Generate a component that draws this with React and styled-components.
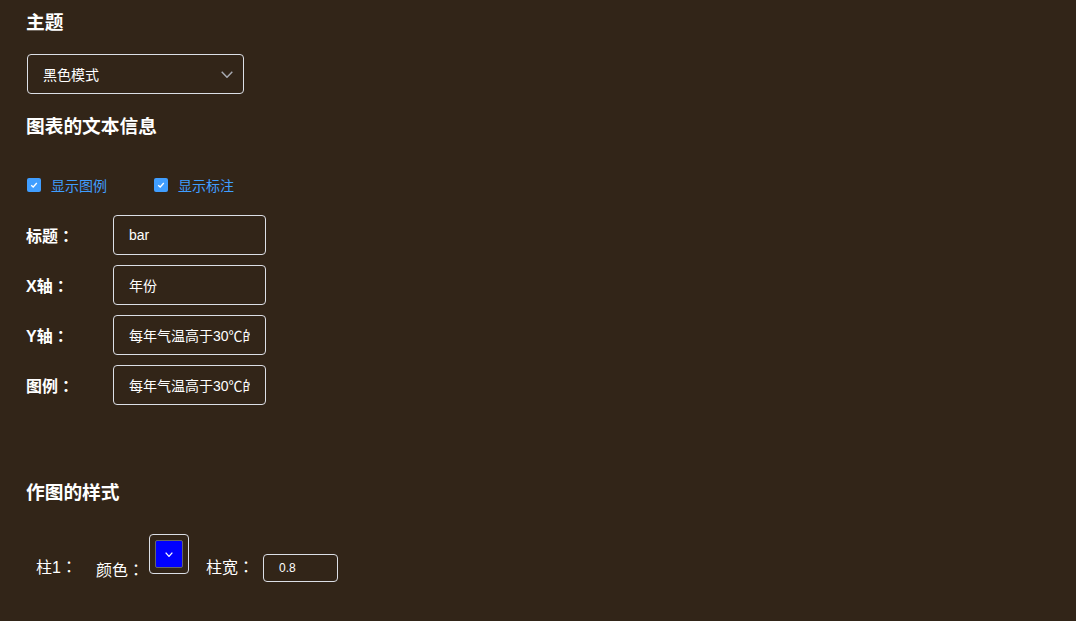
import React from "react";
import styled, { createGlobalStyle } from "styled-components";

const GlobalStyle = createGlobalStyle`
  html, body {
    margin: 0;
    padding: 0;
    background: #322518;
  }
  body {
    font-family: "Liberation Sans", "Noto Sans CJK SC", sans-serif;
    color: #ffffff;
  }
`;

const Chevron = ({ w = 12, h = 7, color = "#a8abb2", stroke = 1.4 }) => (
  <svg width={w} height={h} viewBox={`0 0 ${w} ${h}`}>
    <polyline
      points={`${stroke / 2},${stroke / 2} ${w / 2},${h - stroke / 2} ${w - stroke / 2},${stroke / 2}`}
      fill="none"
      stroke={color}
      strokeWidth={stroke}
    />
  </svg>
);

const Tick = () => (
  <svg width="10" height="10" viewBox="0 0 10 10">
    <path d="M2.2 5.2 4.2 7 7.8 3" fill="none" stroke="#fff" strokeWidth="1.3" />
  </svg>
);

const items = [
  { label: "标题", value: "bar" },
  { label: "X轴", value: "年份" },
  { label: "Y轴", value: "每年气温高于30℃的天数" },
  { label: "图例", value: "每年气温高于30℃的天数" },
];

const App = () => {
  return (
    <Page>
      <GlobalStyle />
      <Heading>主题</Heading>
      <Select>
        <span>黑色模式</span>
        <Chevron />
      </Select>
      <Heading $top={21}>图表的文本信息</Heading>
      <CheckRow>
        <Check>
          <Box>
            <Tick />
          </Box>
          显示图例
        </Check>
        <Check>
          <Box>
            <Tick />
          </Box>
          显示标注
        </Check>
      </CheckRow>
      <Form>
        {items.map((it) => (
          <FormRow key={it.label}>
            <Label>
              {it.label}
              <Colon>：</Colon>
            </Label>
            <Input>
              <span>{it.value}</span>
            </Input>
          </FormRow>
        ))}
      </Form>
      <Heading $top={76}>作图的样式</Heading>
      <StyleRow>
        <Plain $top={20} $right={19}>
          柱1<Colon>：</Colon>
        </Plain>
        <Plain $top={23} $right={5}>
          颜色<Colon>：</Colon>
        </Plain>
        <Picker>
          <Swatch>
            <Chevron w={8} h={5} color="#ffffff" stroke={1.3} />
          </Swatch>
        </Picker>
        <Plain $top={20} $right={9} $left={17}>
          柱宽<Colon>：</Colon>
        </Plain>
        <SmallInput>0.8</SmallInput>
      </StyleRow>
    </Page>
  );
};

export default App;

const Page = styled.div`
  padding: 11px 26px 30px;
  display: flex;
  flex-direction: column;
  align-items: flex-start;
`;

const Heading = styled.h3`
  margin: ${(p) => p.$top || 0}px 0 0;
  font-size: 18.72px;
  line-height: 24px;
  font-weight: 700;
  color: #ffffff;
`;

const Select = styled.div`
  margin: 19px 0 0 1px;
  box-sizing: border-box;
  width: 217px;
  height: 40px;
  padding: 0 10px 0 15px;
  border: 1px solid #dcdfe6;
  border-radius: 4px;
  display: flex;
  align-items: center;
  justify-content: space-between;
  font-size: 14px;
  color: #ffffff;
`;

const CheckRow = styled.div`
  margin-top: 36px;
  height: 20px;
  display: flex;
  align-items: center;
  padding-left: 1px;
`;

const Check = styled.label`
  display: flex;
  align-items: center;
  gap: 10px;
  margin-right: 47px;
  font-size: 14px;
  color: #409eff;
`;

const Box = styled.span`
  width: 14px;
  height: 14px;
  border-radius: 2px;
  background: #409eff;
  display: flex;
  align-items: center;
  justify-content: center;
`;

const Form = styled.div`
  margin-top: 20px;
  display: flex;
  flex-direction: column;
  gap: 10px;
`;

const FormRow = styled.div`
  display: flex;
  align-items: center;
`;

const Colon = styled.span`
  font-family: "Noto Sans CJK TC", sans-serif;
`;

const Label = styled.span`
  width: 87px;
  font-size: 16px;
  font-weight: 700;
  color: #ffffff;
`;

const Input = styled.div`
  box-sizing: border-box;
  width: 153px;
  height: 40px;
  padding: 0 15px;
  border: 1px solid #dcdfe6;
  border-radius: 4px;
  display: flex;
  align-items: center;
  font-size: 14px;
  color: #ffffff;

  span {
    display: block;
    width: 100%;
    white-space: nowrap;
    overflow: hidden;
  }
`;

const StyleRow = styled.div`
  margin-top: 29px;
  padding-left: 10px;
  display: flex;
  align-items: flex-start;
`;

const Plain = styled.span`
  margin: ${(p) => p.$top}px ${(p) => p.$right || 0}px 0 ${(p) => p.$left || 0}px;
  font-size: 16px;
  line-height: 24px;
  color: #ffffff;
`;

const Picker = styled.div`
  box-sizing: border-box;
  width: 40px;
  height: 40px;
  padding: 5px;
  border: 1px solid #dcdfe6;
  border-radius: 4px;
  display: flex;
`;

const Swatch = styled.div`
  flex: 1;
  border: 1px solid #666;
  border-radius: 2px;
  background: #0000ff;
  display: flex;
  align-items: center;
  justify-content: center;
`;

const SmallInput = styled.div`
  margin-top: 20px;
  box-sizing: border-box;
  width: 75px;
  height: 28px;
  padding: 0 15px;
  border: 1px solid #dcdfe6;
  border-radius: 4px;
  display: flex;
  align-items: center;
  font-size: 12px;
  color: #ffffff;
`;
